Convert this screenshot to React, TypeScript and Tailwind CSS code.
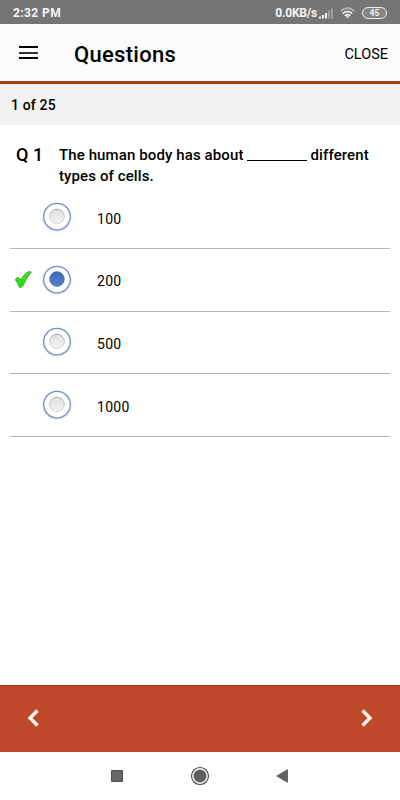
import { useState } from 'react'

const options = [
  { label: '100', correct: false },
  { label: '200', correct: true },
  { label: '500', correct: false },
  { label: '1000', correct: false },
]

function StatusBar() {
  return (
    <div className="flex h-6 items-center bg-[#757575] pl-[13px] pr-[13px] text-[12px] font-bold leading-6 text-[#f4f4f4]">
      <span className="pt-[2px] tracking-[0.4px]">2:32 PM</span>
      <span className="ml-auto pt-[2px] text-[12px] tracking-[-0.2px]">0.0KB/s</span>
      {/* Signal strength */}
      <svg width="15" height="11" viewBox="0 0 15 11" className="ml-[2px] mt-[2px]">
        <path d="M0 8.500h2v2H0zM3 7h2v3.500H3zM6 5h2v5.500H6z" fill="#f2f2f2" />
        <path d="M9 2.500h2v8H9zM12 .5h2v10h-2z" fill="#a2a2a2" />
      </svg>
      {/* Wifi */}
      <svg width="15" height="12" viewBox="0 0 15 12" className="ml-[6px] mt-[1px]" fill="none" strokeWidth="1.600">
        <path d="M.6 4.200Q7.500-1.800 14.400 4.200" stroke="#b5b5b5" />
        <path d="M2.700 6.600Q7.500 2.400 12.300 6.600" stroke="#f5f5f5" />
        <path d="M4.800 8.800Q7.500 6.600 10.200 8.800" stroke="#f5f5f5" />
        <path d="M5.900 9.700Q7.500 8.600 9.100 9.700L7.500 11.500z" fill="#f5f5f5" />
      </svg>
      {/* Battery */}
      <span className="ml-[7px] mt-[1px] flex h-[12px] w-[25px] items-center justify-center rounded-full border border-[#eeeeee] bg-[#858585] pt-px text-[8.5px] leading-none">
        45
      </span>
    </div>
  )
}

function Radio({ checked }: { checked: boolean }) {
  return (
    <svg width="32" height="32" viewBox="0 0 32 32">
      <defs>
        <linearGradient id="ring" x1="0" y1="0" x2="0" y2="1">
          <stop offset="0" stopColor="#6f8dcc" />
          <stop offset="1" stopColor="#8293ba" />
        </linearGradient>
        <linearGradient id="well" x1="0" y1="0" x2="0" y2="1">
          <stop offset="0" stopColor="#e2e2e2" />
          <stop offset="1" stopColor="#f2f2f2" />
        </linearGradient>
        <linearGradient id="wellEdge" x1="0" y1="0" x2="0" y2="1">
          <stop offset="0" stopColor="#a9a9a9" />
          <stop offset="1" stopColor="#dddddd" />
        </linearGradient>
        <linearGradient id="dot" x1="0" y1="0" x2="0" y2="1">
          <stop offset="0" stopColor="#3f68b4" />
          <stop offset="1" stopColor="#5280cf" />
        </linearGradient>
      </defs>
      <circle cx="16" cy="16.300" r="13.600" fill="none" stroke="#dce8fa" strokeWidth="2" />
      <circle cx="16" cy="15.600" r="13.300" fill="#fff" stroke="url(#ring)" strokeWidth="1.300" />
      {checked ? (
        <circle cx="16" cy="15" r="7.400" fill="url(#dot)" stroke="#486fb9" strokeWidth=".6" />
      ) : (
        <circle cx="16" cy="15.500" r="7.300" fill="url(#well)" stroke="url(#wellEdge)" strokeWidth="1" />
      )}
    </svg>
  )
}

function Tick() {
  return (
    <svg width="18" height="18" viewBox="0 0 18 18" className="mt-px">
      <defs>
        <linearGradient id="tick" x1="0" y1="0" x2="0" y2="1">
          <stop offset="0" stopColor="#4fd83a" />
          <stop offset="1" stopColor="#1fe010" />
        </linearGradient>
      </defs>
      <path
        d="M1.300 8.800Q2.600 6.200 4.700 6.600Q6 7.300 6.700 9.200Q9.300 4.200 12.600 1.400Q15.200.2 17.400.9Q12.600 7 8.700 15Q7 16.900 5.200 16.200Q3.800 12 1.300 8.800z"
        fill="url(#tick)"
        stroke="#2caf1c"
        strokeWidth=".8"
      />
    </svg>
  )
}

export default function App() {
  const [selected, setSelected] = useState(1)

  return (
    <div className="flex h-[800px] w-[400px] flex-col bg-white font-['Roboto',sans-serif] text-black">
      <StatusBar />

      <header className="flex h-[60px] items-center border-b-[3px] border-[#a83b16] bg-[#fbfbfb] pl-[19px] pr-[12px]">
        <button aria-label="Menu" className="flex w-[19px] flex-col gap-[3.5px]">
          <span className="h-[2px] bg-black" />
          <span className="h-[2px] bg-[#333]" />
          <span className="h-[2px] bg-black" />
        </button>
        <h1 className="ml-[36px] pt-[4px] text-[22px] font-medium leading-7 tracking-[0.3px]">Questions</h1>
        <button className="ml-auto pt-[4px] text-[14.5px]">CLOSE</button>
      </header>

      <div className="flex h-[41px] items-center bg-[#f1f1f1] pl-[11px] pt-[2px] text-[14px] font-medium tracking-[0.15px]">
        1 of 25
      </div>

      <main className="flex-1 px-[10px]">
        <div className="flex h-[61.5px] pt-[20px] font-medium">
          <span className="w-[49px] shrink-0 pl-[6px] text-[18px] leading-[19px]">Q 1</span>
          <p className="whitespace-nowrap text-[15px] leading-[21px] tracking-[0.11px]">
            The human body has about
            <span className="ml-[3px] mr-[4px] inline-block h-[3px] w-[60px] border-b border-black align-[-1px]" />
            different
            <br />
            types of cells.
          </p>
        </div>

        <ul>
          {options.map((option, i) => (
            <li
              key={option.label}
              className="flex h-[62.6px] items-center border-b border-[#b5b5b5]"
              onClick={() => setSelected(i)}
            >
              <span className="w-[31px] pl-[4px]">{option.correct && <Tick />}</span>
              <Radio checked={selected === i} />
              <span className="ml-[24px] pt-[4px] text-[14px] tracking-[0.3px]">{option.label}</span>
            </li>
          ))}
        </ul>
      </main>

      <div className="flex h-[67px] items-center justify-between border-t border-[#963820] bg-[#bf482b] px-[27px] pb-[2px]">
        <button aria-label="Previous question">
          <svg width="13" height="20" viewBox="0 0 13 20" fill="none" stroke="#fff6ee" strokeWidth="3.400">
            <path d="M10.500 2.500L3 10L10.500 17.500" />
          </svg>
        </button>
        <button aria-label="Next question">
          <svg width="13" height="20" viewBox="0 0 13 20" fill="none" stroke="#fff6ee" strokeWidth="3.400">
            <path d="M2.500 2.500L10 10L2.500 17.500" />
          </svg>
        </button>
      </div>

      {/* System navigation */}
      <nav className="flex h-12 items-center pl-[111px]">
        <svg width="12" height="12" viewBox="0 0 12 12">
          <path d="M.5.5h11v11H.5z" fill="#666" stroke="#505050" />
        </svg>
        <svg width="20" height="20" viewBox="0 0 20 20" className="ml-[67px]">
          <circle cx="10" cy="10" r="8.500" fill="none" stroke="#444" strokeWidth="1.100" />
          <circle cx="10" cy="10" r="6.500" fill="#606060" />
        </svg>
        <svg width="12" height="14" viewBox="0 0 12 14" className="ml-[66px]">
          <path d="M11.500.7v12.600L.7 7z" fill="#626262" stroke="#484848" strokeWidth=".7" />
        </svg>
      </nav>
    </div>
  )
}
